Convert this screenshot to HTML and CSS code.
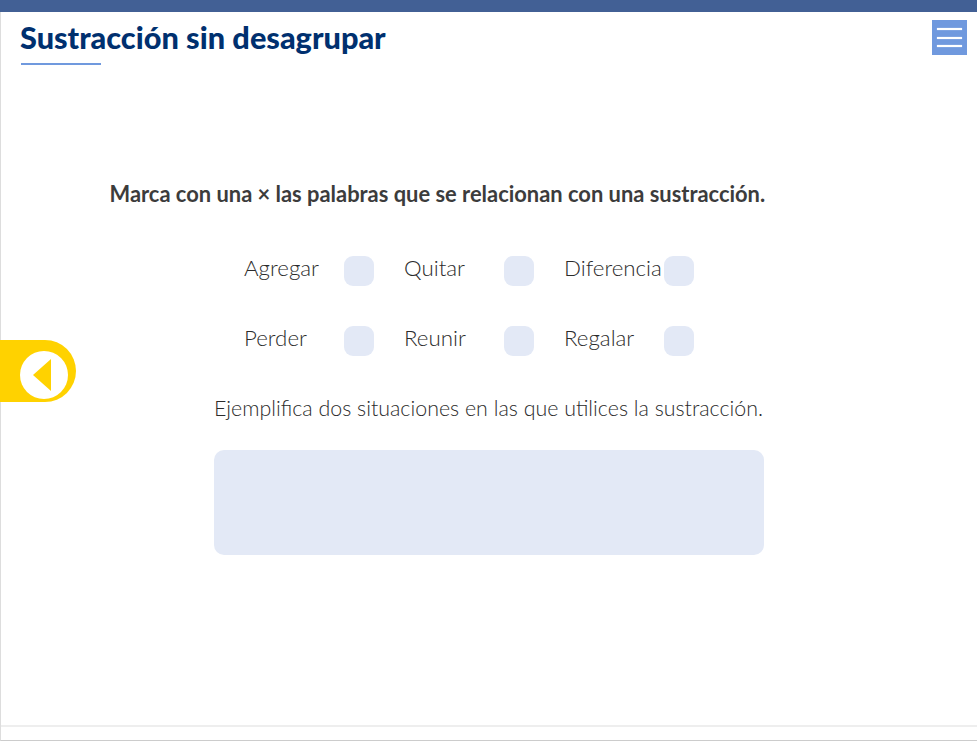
FILE: index.html
```html
<!DOCTYPE html>
<html lang="es">
<head>
<meta charset="utf-8">
<title>Sustracción sin desagrupar</title>
<link rel="stylesheet" href="styles.css">
</head>
<body>
<div class="page">
  <div class="topbar"></div>
  <header class="header">
    <div class="heading">
      <h1 class="title">Sustracción sin desagrupar</h1>
      <div class="rule"></div>
    </div>
    <button class="menu" aria-label="Menú"><span></span><span></span><span></span></button>
  </header>
  <main class="content">
    <p class="question">Marca con una × las palabras que se relacionan con una sustracción.</p>
    <div class="options">
      <div class="option"><span class="word">Agregar</span><span class="box"></span></div>
      <div class="option"><span class="word">Quitar</span><span class="box"></span></div>
      <div class="option"><span class="word">Diferencia</span><span class="box"></span></div>
      <div class="option"><span class="word">Perder</span><span class="box"></span></div>
      <div class="option"><span class="word">Reunir</span><span class="box"></span></div>
      <div class="option"><span class="word">Regalar</span><span class="box"></span></div>
    </div>
    <p class="prompt">Ejemplifica dos situaciones en las que utilices la sustracción.</p>
    <div class="answer"></div>
  </main>
  <button class="back" aria-label="Atrás">
    <svg width="48" height="48" viewBox="0 0 48 48"><circle cx="24" cy="24" r="24" fill="#fff"/><path d="M13 24 31 8V40Z" fill="#ffd200"/></svg>
  </button>
  <footer class="footer"></footer>
</div>
</body>
</html>
```
FILE: styles.css
```css
* { box-sizing: border-box; }
html, body { margin: 0; height: 100%; }
body { background: #fff; font-family: Lato, "Liberation Sans", sans-serif; overflow: hidden; }
.page { position: relative; height: 741px; border-left: 1px solid #ddd; border-bottom: 1px solid #ccc; display: flex; flex-direction: column; }
.topbar { height: 12px; background: #426095; margin-left: -1px; flex: none; }
.header { display: flex; justify-content: space-between; align-items: flex-start; padding: 8px 10px 0 20px; height: 102px; flex: none; }
.title { margin: 0 0 0 -1px; font-size: 30.7px; line-height: 36px; font-weight: 900; color: #00306f; }
.rule { width: 80px; height: 2px; margin-top: 7px; background: #7099de; }
.menu { width: 35px; height: 35px; padding: 8px 5px; border: 0; background: #7099de; display: flex; flex-direction: column; justify-content: space-between; }
.menu span { display: block; height: 2px; background: #fff; box-shadow: 0 0 1px #fff; }
.content { flex: 1; display: flex; flex-direction: column; align-items: center; }
.question { align-self: flex-start; margin: 0 0 46px 108.5px; padding-top: 64px; font-size: 21.9px; line-height: 32px; font-weight: 700; color: #3c3c3c; }
.options { align-self: flex-start; margin-left: 243px; display: grid; grid-template-columns: repeat(3, 130px); grid-auto-rows: 30px; column-gap: 30px; row-gap: 40px; }
.option { display: flex; justify-content: space-between; }
.word { font-size: 22.3px; font-weight: 300; line-height: 24px; color: #2b2b2b; }
.box { width: 30px; height: 30px; border-radius: 9px; background: #e3e9f6; }
.prompt { margin: 36px 0 26px -1px; font-size: 21.4px; line-height: 32px; font-weight: 300; color: #2b2b2b; }
.answer { width: 550px; height: 105px; border-radius: 10px; background: #e3e9f6; margin-left: -1px; }
.back { position: absolute; left: -1px; top: 340px; width: 76px; height: 62px; padding: 7px 0 0 20px; border: 0; border-radius: 0 31px 31px 0; background: #ffd200; text-align: left; }
.back svg { display: block; }
.footer { height: 15px; border-top: 2px solid #eee; flex: none; }
```
